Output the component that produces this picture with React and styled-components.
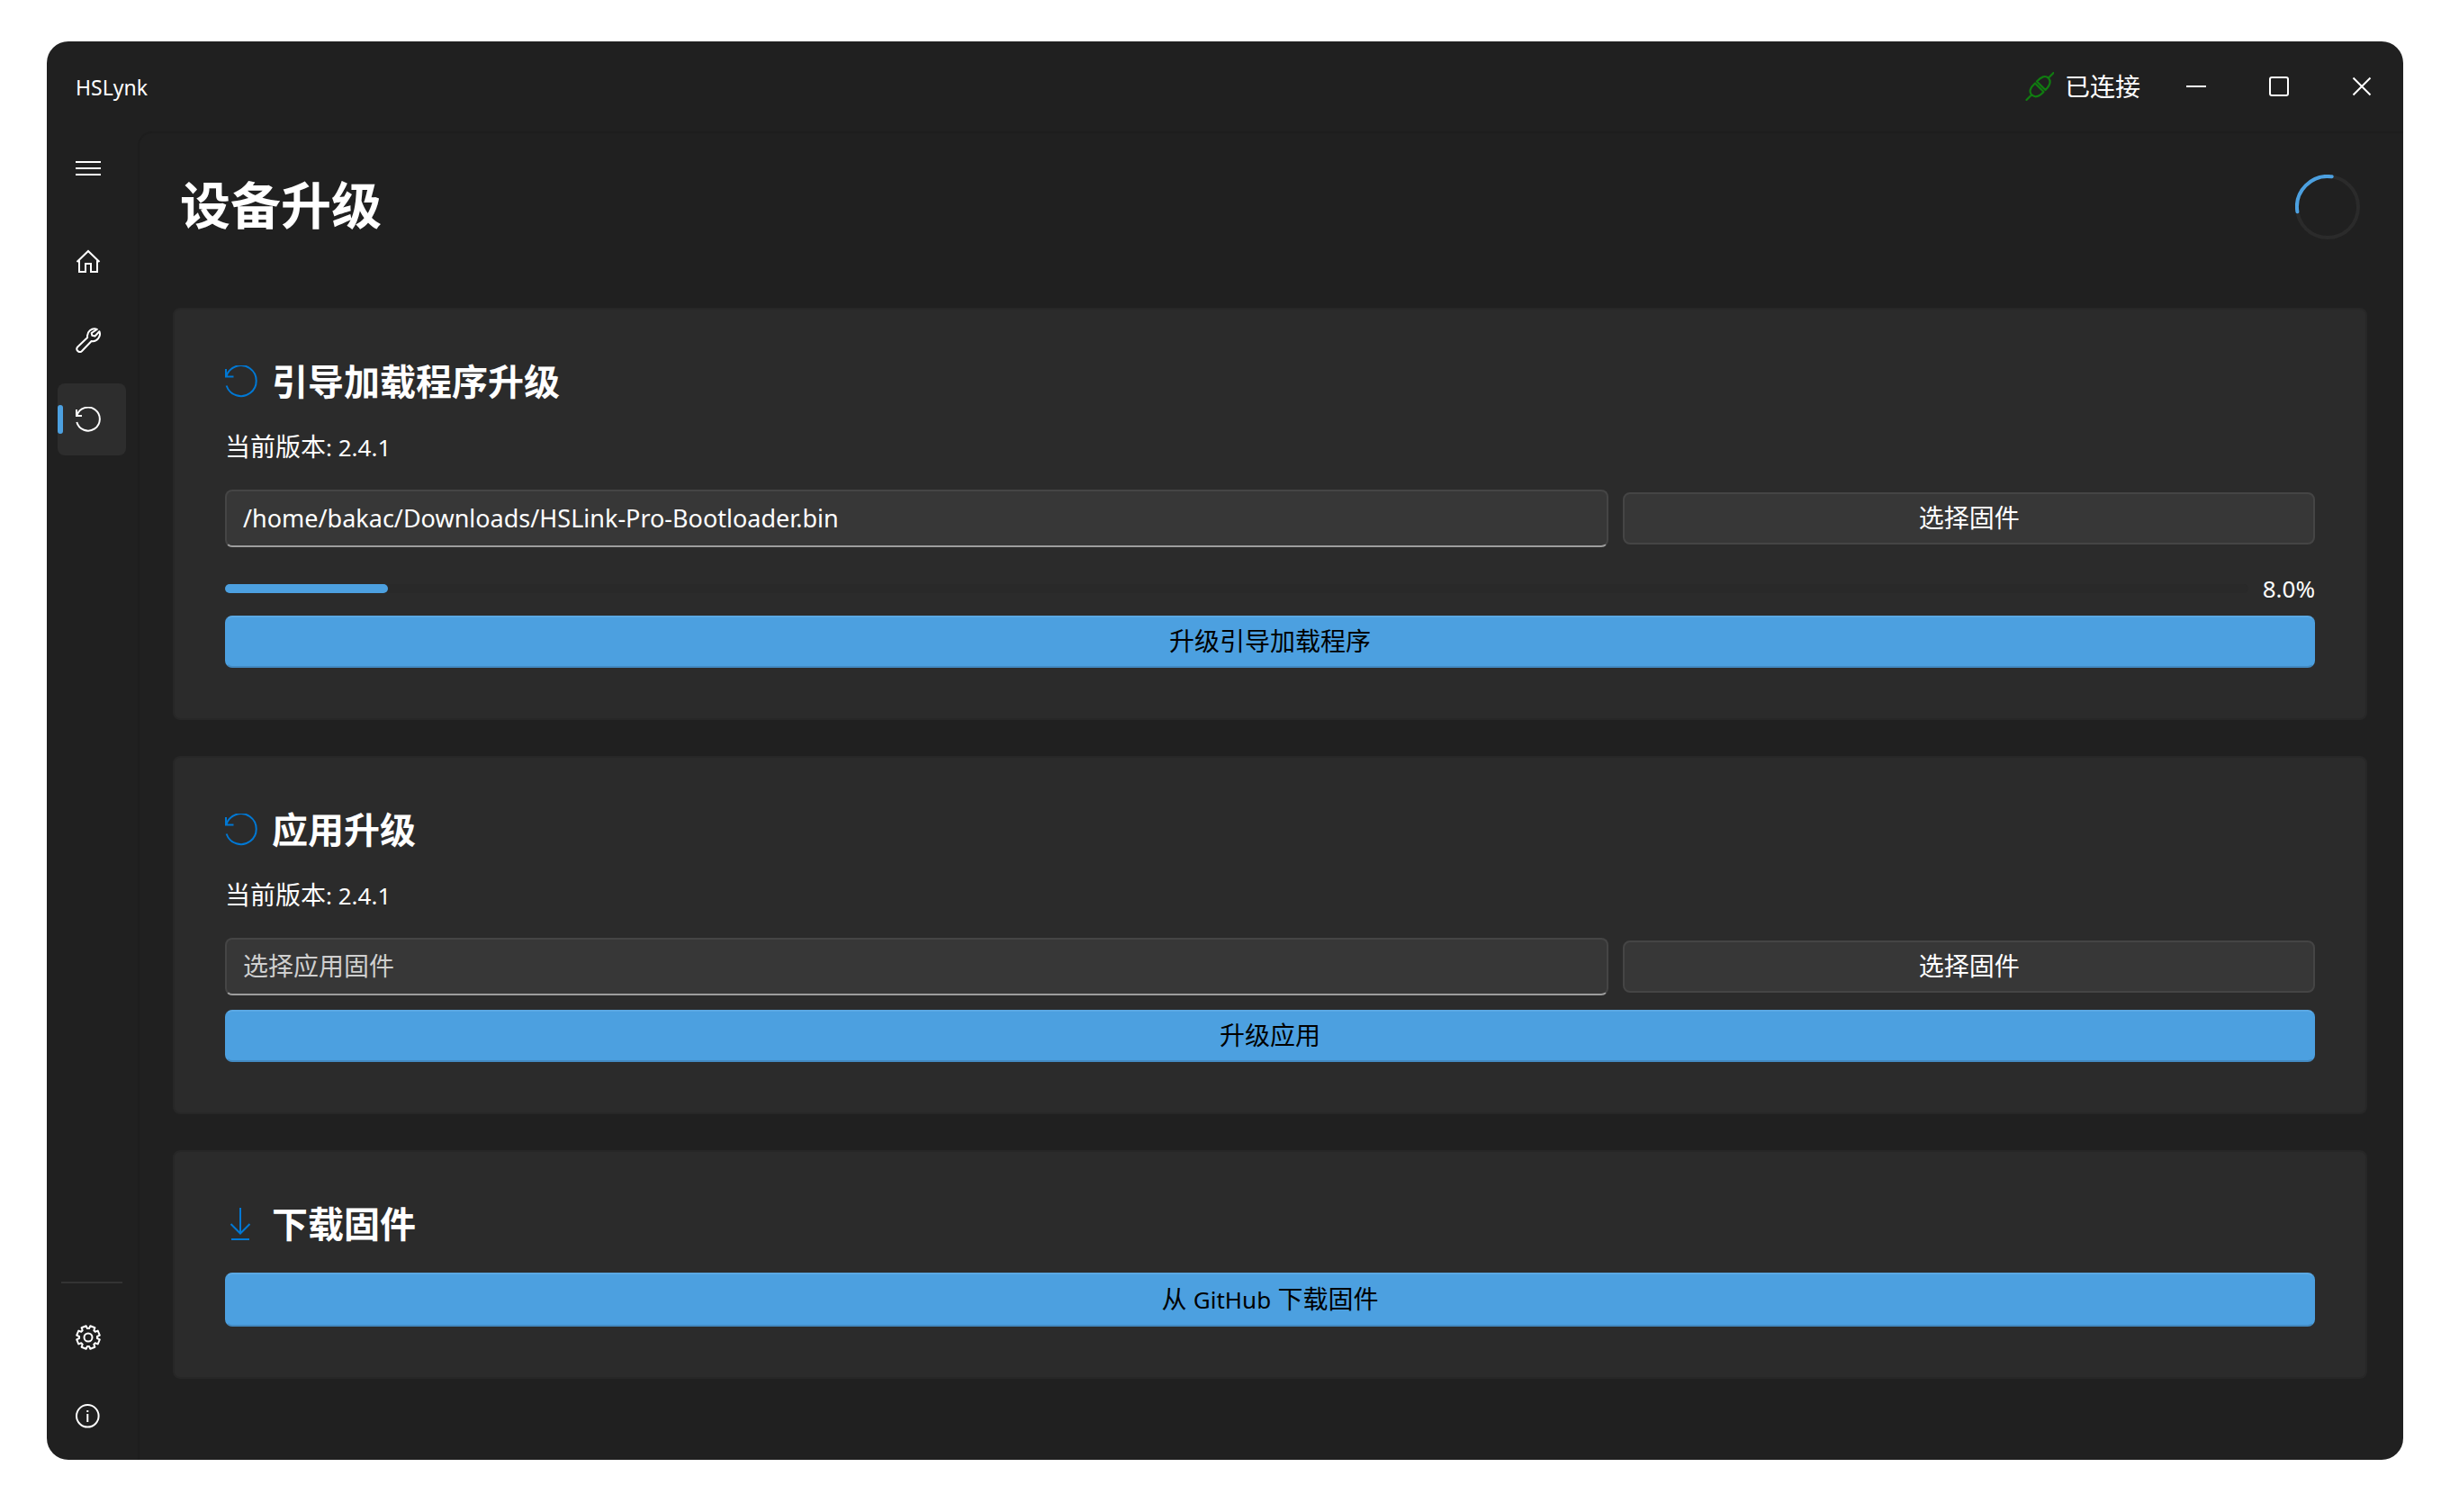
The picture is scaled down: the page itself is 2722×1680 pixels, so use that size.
import React, { useState } from "react";
import styled, { createGlobalStyle } from "styled-components";

const color = {
  window: "#202020",
  edge: "#1d1d1d",
  card: "#2b2b2b",
  cardEdge: "#272727",
  control: "#373737",
  controlEdge: "#454545",
  accent: "#4ca0e0",
  accentTop: "#5ba8e3",
  accentBottom: "#438ac2",
  icon: "#0078d4",
  ok: "#107c10",
};

const Global = createGlobalStyle`
  *, *::before, *::after { box-sizing: border-box; }
  html, body, #root { height: 100%; }
  body {
    margin: 0;
    background: #fff;
    color: #fff;
    font-family: "Noto Sans", "Noto Sans CJK SC", sans-serif;
    font-size: 28px;
    line-height: 36px;
  }
  button, input { font: inherit; color: inherit; margin: 0; }
  button { cursor: pointer; }
  h1, h2, p { margin: 0; }
`;

const Desktop = styled.div`
  height: 100%;
  min-height: 1200px;
  padding: 46px 52px 58px;
`;

const Window = styled.div`
  height: 100%;
  display: flex;
  flex-direction: column;
  overflow: hidden;
  border-radius: 24px;
  background: ${color.window};
`;

const TitleBar = styled.header`
  height: 100px;
  flex: none;
  display: flex;
  align-items: center;
  padding-left: 32px;
`;

const AppName = styled.span`
  font-size: 23px;
  padding-top: 2px;
  margin-right: auto;
`;

const Status = styled.div`
  display: flex;
  align-items: center;
  gap: 12px;
  margin-right: 16px;
  svg { color: ${color.ok}; }
`;

const CaptionButton = styled.button`
  width: 92px;
  height: 100px;
  padding: 0;
  border: 0;
  background: none;
  display: grid;
  place-items: center;
`;

const Body = styled.div`
  flex: 1;
  min-height: 0;
  display: flex;
`;

const Rail = styled.nav`
  width: 101px;
  flex: none;
  display: flex;
  flex-direction: column;
  gap: 8px;
  padding: 0 12px 8px;
`;

const RailButton = styled.button`
  width: 76px;
  height: 80px;
  display: flex;
  align-items: center;
  padding: 0;
  border: 0;
  border-radius: 8px;
  background: ${(p) => (p.$active ? "#2d2d2d" : "transparent")};
  margin-bottom: ${(p) => (p.$lead ? "16px" : "0")};
  &::before {
    content: "";
    width: 6px;
    height: 32px;
    margin-right: 14px;
    border-radius: 3px;
    background: ${(p) => (p.$active ? color.accent : "transparent")};
  }
`;

const RailDivider = styled.hr`
  width: 68px;
  height: 2px;
  margin: auto 4px 12px;
  border: 0;
  background: #333;
`;

const Page = styled.main`
  flex: 1;
  min-width: 0;
  border: 2px solid ${color.edge};
  border-width: 2px 0 0 2px;
  border-top-left-radius: 16px;
  padding: 0 40px 0 37px;
`;

const PageHead = styled.div`
  height: 164px;
  display: flex;
  align-items: center;
  justify-content: space-between;
  margin-bottom: 30px;
  padding: 0 8px;
`;

const PageTitle = styled.h1`
  padding-bottom: 6px;
  font-size: 56px;
  line-height: 72px;
  font-weight: 700;
`;

const Cards = styled.div`
  display: flex;
  flex-direction: column;
  gap: 40px;
`;

const CardBox = styled.section`
  border: 2px solid ${color.cardEdge};
  border-radius: 8px;
  background: ${color.card};
  padding: 56px;
`;

const CardTitle = styled.h2`
  display: flex;
  align-items: center;
  gap: 16px;
  margin-bottom: 30px;
  font-size: 40px;
  line-height: 48px;
  font-weight: 700;
  svg { color: ${color.icon}; }
`;

const Version = styled.p`
  margin-bottom: 30px;
`;

const Latin = styled.span`
  font-size: 26px;
  line-height: 28px;
`;

const FileRow = styled.div`
  display: grid;
  grid-template-columns: minmax(0, 2fr) minmax(0, 1fr);
  gap: 16px;
  align-items: center;
  margin-bottom: 16px;
`;

const PathInput = styled.input`
  width: 100%;
  height: 64px;
  padding: 0 18px 2px;
  border: 2px solid ${color.controlEdge};
  border-bottom-color: #9d9d9d;
  border-radius: 8px;
  background: ${color.control};
  font-size: 27px;
  outline: none;
  &::placeholder { font-size: 28px; color: #cfcfcf; opacity: 1; }
`;

const PickButton = styled.button`
  height: 58px;
  padding: 0 24px 2px;
  border: 2px solid ${color.controlEdge};
  border-radius: 8px;
  background: ${color.control};
`;

const AccentButton = styled.button`
  display: block;
  width: 100%;
  height: ${(p) => (p.$tall ? "60px" : "58px")};
  padding: 0 24px 2px;
  border: 2px solid ${color.accent};
  border-top-color: ${color.accentTop};
  border-bottom-color: ${color.accentBottom};
  border-radius: 8px;
  background: ${color.accent};
  color: #000;
`;

const ProgressRow = styled.div`
  display: flex;
  align-items: center;
  gap: 16px;
  margin: 32px 0 16px;
  height: 28px;
`;

const Track = styled.div`
  flex: 1;
  height: 10px;
  border-radius: 5px;
  background: #292929;
`;

const Fill = styled.div`
  height: 100%;
  border-radius: 5px;
  background: ${color.accent};
`;

const Svg = ({ size = 28, sw = 2, children }) => (
  <svg width={size} height={size} viewBox={`0 0 ${size} ${size}`} fill="none" stroke="currentColor"
    strokeWidth={sw} aria-hidden="true">
    {children}
  </svg>
);

const MenuIcon = () => (
  <Svg><path d="M0 8h28M0 15h28M0 22h28" /></Svg>
);
const HomeIcon = () => (
  <Svg><path d="M1.500 15 14 3l12.500 12M4 13.500V26h7v-9h6v9h7V13.500" /></Svg>
);
const WrenchIcon = () => (
  <Svg><path strokeLinejoin="round" d="M23.800 1.900A8 8 0 0 0 13.200 11L2.200 21.500a3.300 3.300 0 0 0 4.600 4.700L17.600 15a8 8 0 0 0 8.800-10.800L21.500 9.500l-3.200-.800-.600-2.700z" /></Svg>
);
const ResetIcon = ({ size = 28 }) => (
  <Svg size={size}>
    {size === 36
      ? <path d="M1 4v8.500h8.500M1.500 12A17 17 0 1 1 1.600 22.500" />
      : <path d="M1 3v7h6M1.500 9.500A13 13 0 1 1 1.300 17" />}
  </Svg>
);
const DownloadIcon = () => (
  <Svg size={36}><path d="M17 0v28M6.500 18 17 28.500 27.500 18M7 35h20" /></Svg>
);
const gear = (() => {
  const pts = [];
  for (let i = 0; i < 8; i++) {
    const base = (i * Math.PI) / 4;
    [[-0.29, 10], [-0.21, 13], [0.21, 13], [0.29, 10]].forEach(([a, r]) => {
      const t = base + Math.PI / 8 + a;
      pts.push(`${(14 + r * Math.cos(t)).toFixed(2)} ${(14 + r * Math.sin(t)).toFixed(2)}`);
    });
  }
  return `M${pts.join("L")}Z`;
})();
const GearIcon = () => (
  <Svg><path strokeLinejoin="round" d={gear} /><circle cx="14" cy="14" r="4.500" /></Svg>
);
const InfoIcon = () => (
  <Svg><circle cx="13.300" cy="13.300" r="12.300" /><path d="M13.300 11v9M13.300 7v2" /></Svg>
);
const PlugIcon = () => (
  <Svg size={32} sw={2.2}>
    <g strokeLinecap="round" strokeLinejoin="round">
      <path d="M1.500 31l5.500-5.500M26 6.500 31.500 1M11 12.500 20.500 22C16.500 26.500 11.500 29 7.500 25.500S6 17 11 12.500ZM13 10.500 22.500 20C27 15.500 29.500 11 26 7S17.500 5.500 13 10.500Z" />
    </g>
  </Svg>
);
const Spinner = () => (
  <svg width="72" height="72" viewBox="0 0 72 72" fill="none" strokeWidth="4" role="img" aria-label="加载中">
    <circle cx="36" cy="36" r="34" stroke="#2b2b2b" />
    <path d="M2.400 41.300A34 34 0 0 1 40.700 2.300" stroke={color.accent} strokeLinecap="round" />
  </svg>
);

function Card({ icon, title, version, field, action, tall, progress }) {
  const [path, setPath] = useState(field ? field.value : "");
  return (
    <CardBox>
      <CardTitle>{icon}{title}</CardTitle>
      {version && <Version>当前版本<Latin>: {version}</Latin></Version>}
      {field && (
        <FileRow>
          <PathInput aria-label={field.hint} placeholder={field.hint} value={path}
            onChange={(e) => setPath(e.target.value)} spellCheck={false} />
          <PickButton type="button">选择固件</PickButton>
        </FileRow>
      )}
      {progress !== undefined && (
        <ProgressRow>
          <Track role="progressbar" aria-label={title} aria-valuenow={progress} aria-valuemin={0} aria-valuemax={100}>
            <Fill style={{ width: `${progress}%` }} />
          </Track>
          <Latin>{progress.toFixed(1)}%</Latin>
        </ProgressRow>
      )}
      <AccentButton type="button" $tall={tall}>{action}</AccentButton>
    </CardBox>
  );
}

export default function App() {
  return (
    <>
      <Global />
      <Desktop lang="zh-CN">
        <Window>
          <TitleBar>
            <AppName>HSLynk</AppName>
            <Status><PlugIcon /><span>已连接</span></Status>
            <CaptionButton aria-label="最小化"><Svg size={24}><path d="M1 12h22" /></Svg></CaptionButton>
            <CaptionButton aria-label="最大化"><Svg size={24}><rect x="2" y="2" width="20" height="20" rx="2" /></Svg></CaptionButton>
            <CaptionButton aria-label="关闭"><Svg size={24}><path d="M2.500 2.500l19 19M21.500 2.500l-19 19" /></Svg></CaptionButton>
          </TitleBar>
          <Body>
            <Rail>
              <RailButton aria-label="菜单" $lead><MenuIcon /></RailButton>
              <RailButton aria-label="主页"><HomeIcon /></RailButton>
              <RailButton aria-label="配置"><WrenchIcon /></RailButton>
              <RailButton aria-label="升级" aria-current="page" $active><ResetIcon /></RailButton>
              <RailDivider />
              <RailButton aria-label="设置"><GearIcon /></RailButton>
              <RailButton aria-label="关于"><InfoIcon /></RailButton>
            </Rail>
            <Page>
              <PageHead>
                <PageTitle>设备升级</PageTitle>
                <Spinner />
              </PageHead>
              <Cards>
                <Card icon={<ResetIcon size={36} />} title="引导加载程序升级" version="2.4.1"
                  field={{ value: "/home/bakac/Downloads/HSLink-Pro-Bootloader.bin", hint: "选择引导加载程序固件" }}
                  progress={8.04} action="升级引导加载程序" />
                <Card icon={<ResetIcon size={36} />} title="应用升级" version="2.4.1"
                  field={{ value: "", hint: "选择应用固件" }} action="升级应用" />
                <Card icon={<DownloadIcon />} title="下载固件" action={<>从 <Latin>GitHub</Latin> 下载固件</>} tall />
              </Cards>
            </Page>
          </Body>
        </Window>
      </Desktop>
    </>
  );
}
